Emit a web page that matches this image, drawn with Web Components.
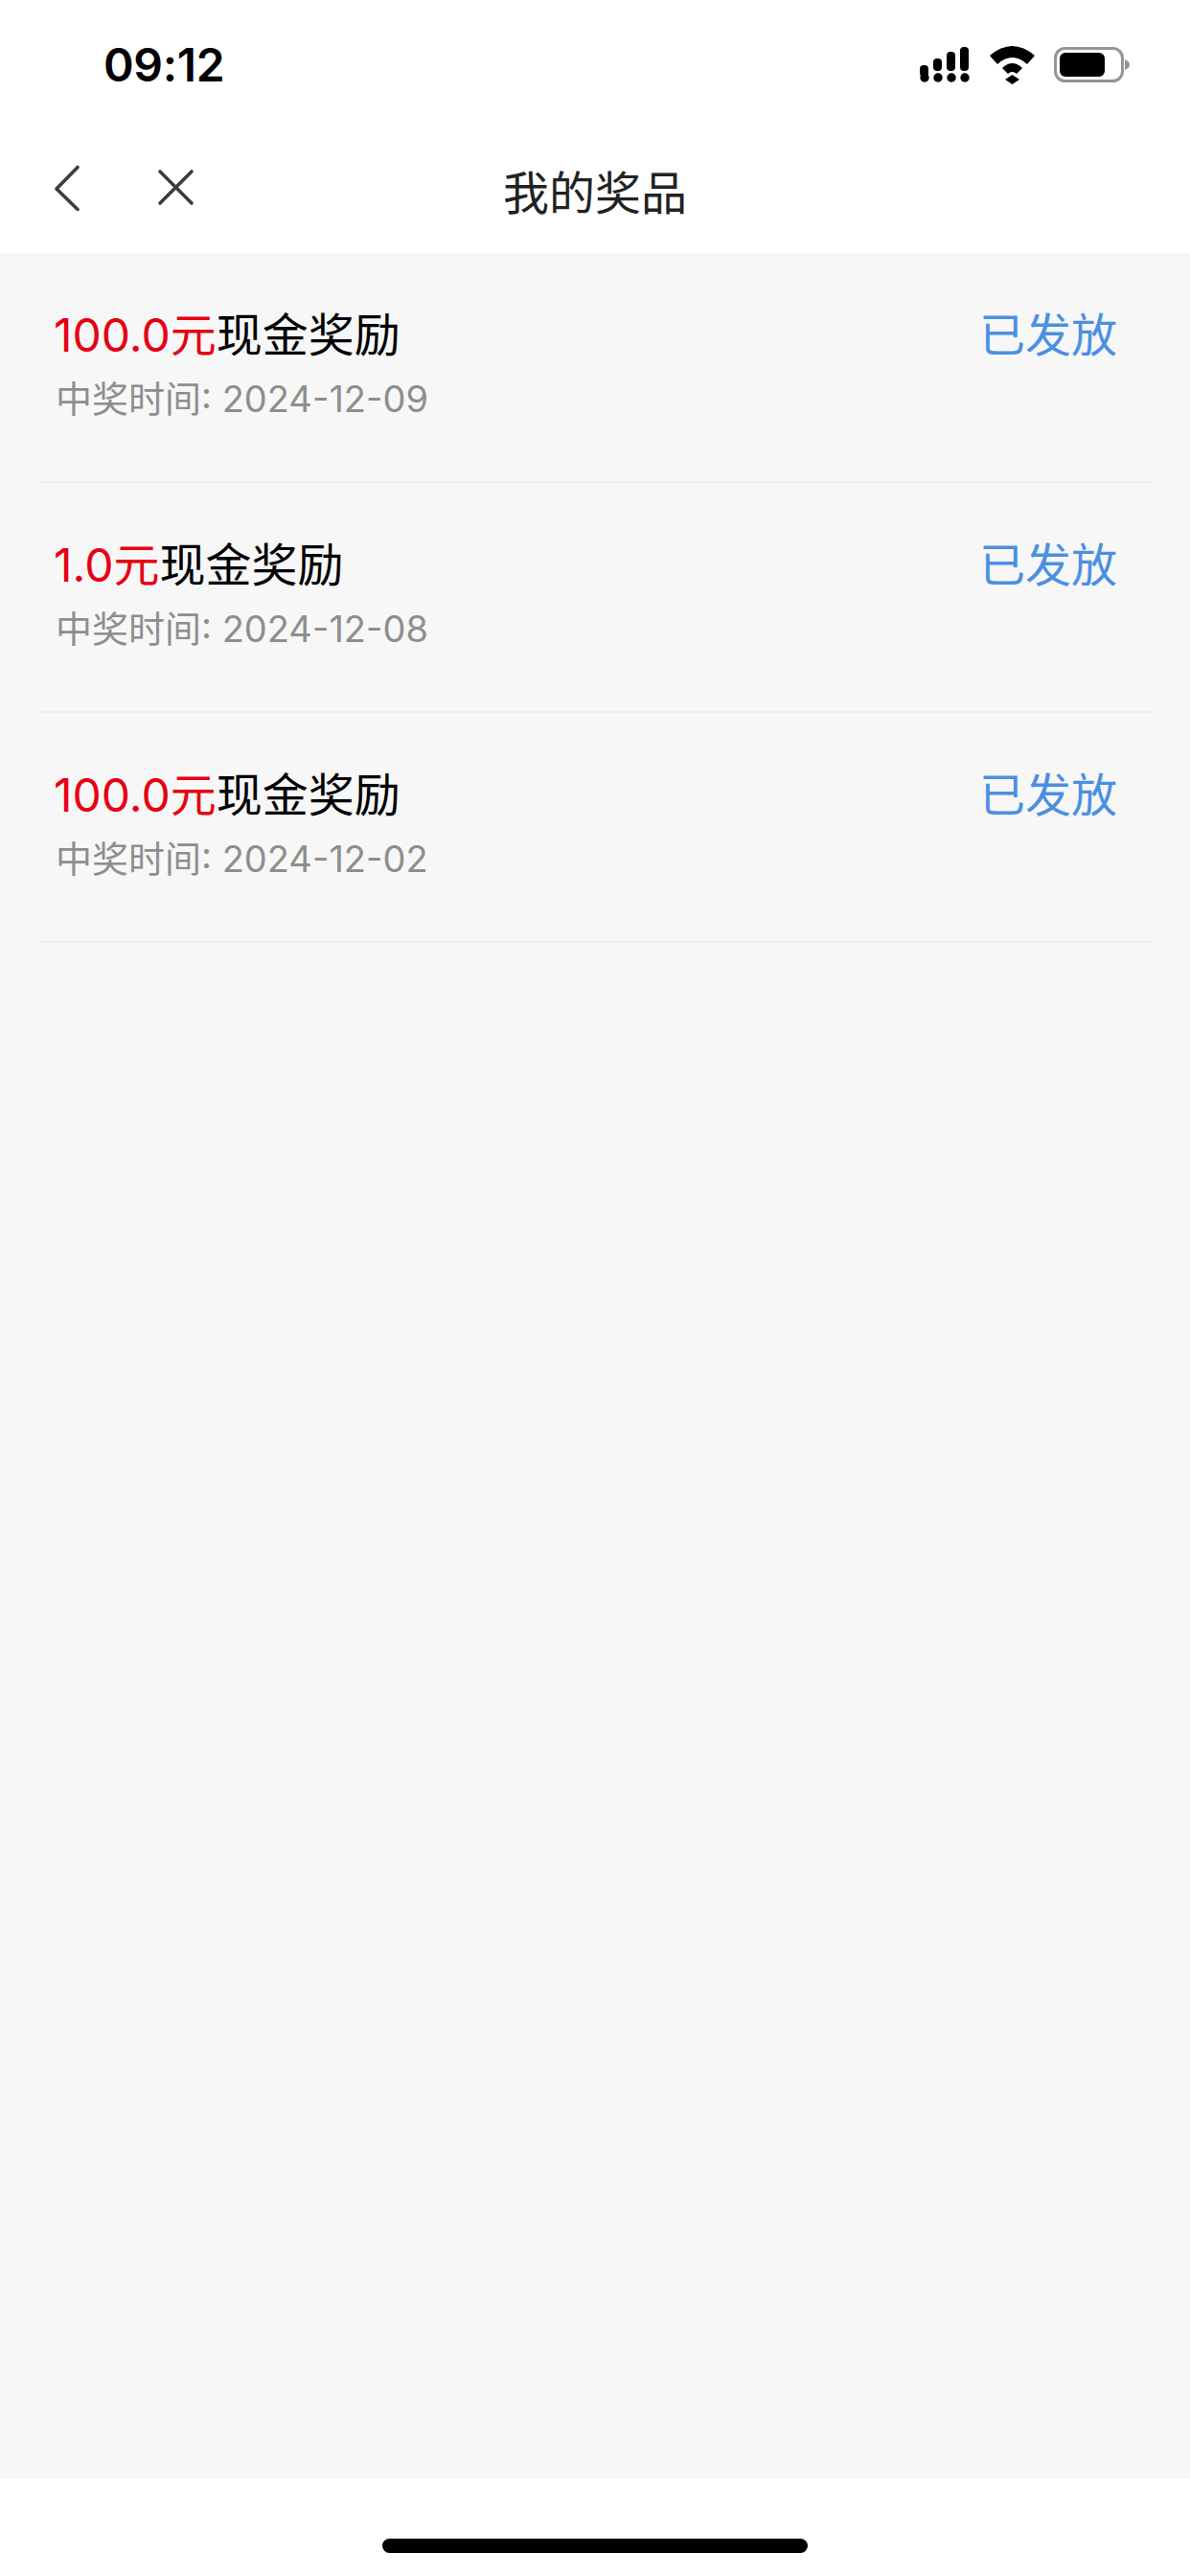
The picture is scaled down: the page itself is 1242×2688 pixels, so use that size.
<!DOCTYPE html>
<html lang="zh">
<head>
<meta charset="utf-8">
<title>我的奖品</title>
<style>
html, body { margin: 0; height: 100%; }
body {
    display: flex;
    flex-direction: column;
    height: 2688px;
    background: #fff;
    font-family: Inter, "Noto Sans CJK SC", sans-serif;
}
</style>
</head>
<body>
<status-bar time="09:12"></status-bar>
<nav-bar>我的奖品</nav-bar>
<prize-list>
    <prize-row amount="100.0元" date="中奖时间: 2024-12-09" state="已发放"></prize-row>
    <prize-row amount="1.0元" date="中奖时间: 2024-12-08" state="已发放"></prize-row>
    <prize-row amount="100.0元" date="中奖时间: 2024-12-02" state="已发放"></prize-row>
</prize-list>
<home-bar></home-bar>

<script>
class StatusBar extends HTMLElement {
    connectedCallback() {
        this.attachShadow({ mode: 'open' }).innerHTML = `
        <style>
        :host { display: flex; flex: none; height: 132px; box-sizing: border-box; padding: 0 0 0 108px; align-items: flex-start; justify-content: space-between; background: #fff; }
        .time { margin-top: 39px; font: 600 48px/58px Inter, sans-serif; color: #000; letter-spacing: -0.3px; }
        svg { margin: 44px 0 0 0; display: block; }
        </style>
        <span class="time">${this.getAttribute('time')}</span>
        <svg width="282" height="44" viewBox="0 0 282 44">
            <!-- signal -->
            <g fill="#000">
                <rect x="0" y="24" width="9" height="12" rx="4"/>
                <rect x="14" y="17" width="9" height="13" rx="4"/>
                <rect x="28" y="10" width="9" height="20" rx="4"/>
                <rect x="42" y="5" width="9" height="25" rx="4"/>
                <circle cx="5" cy="37" r="4.7"/>
                <circle cx="19" cy="37" r="4.7"/>
                <circle cx="33" cy="37" r="4.7"/>
                <circle cx="47" cy="37" r="4.7"/>
            </g>
            <!-- wifi -->
            <g fill="#000">
                <path d="M73 14 Q96.500 -6 120 14 L112 23 Q96.500 9 81 23 Z"/>
                <path d="M86 27 Q96.500 17 107 27 L101 33 Q96.500 29 92 33 Z"/>
                <path d="M96.500 36 L104 41 L96.500 46 L89 41 Z" transform="translate(0 -2)"/>
            </g>
            <!-- battery -->
            <rect x="141.500" y="6.500" width="70" height="34" rx="10" fill="none" stroke="#959595" stroke-width="3"/>
            <rect x="146" y="11" width="47" height="25" rx="6" fill="#000"/>
            <path d="M214 18 Q219 20 219 23.500 Q219 27 214 29 Z" fill="#959595"/>
        </svg>`;
    }
}

class NavBar extends HTMLElement {
    connectedCallback() {
        this.attachShadow({ mode: 'open' }).innerHTML = `
        <style>
        :host { display: block; flex: none; height: 132px; position: relative; background: #fff; }
        .title { display: flex; height: 100%; align-items: center; justify-content: center; font-size: 48px; color: #222; }
        .icons { position: absolute; left: 56px; top: 40px; display: flex; gap: 80px; }
        svg { display: block; }
        </style>
        <div class="title"><slot></slot></div>
        <div class="icons">
            <svg width="28" height="48" viewBox="0 0 28 48"><path d="M25 2.500 L3 25 L25 46.500" fill="none" stroke="#3c3c3c" stroke-width="3.600" stroke-linecap="round" stroke-linejoin="round"/></svg>
            <svg width="40" height="48" viewBox="0 0 40 48"><path d="M3 7 L36 40 M36 7 L3 40" fill="none" stroke="#3c3c3c" stroke-width="3.600" stroke-linecap="round"/></svg>
        </div>`;
    }
}

class PrizeList extends HTMLElement {
    connectedCallback() {
        this.attachShadow({ mode: 'open' }).innerHTML = `
        <style>
        :host { display: block; flex: 1; background: #f7f7f7; }
        </style>
        <slot></slot>`;
    }
}

class PrizeRow extends HTMLElement {
    connectedCallback() {
        this.attachShadow({ mode: 'open' }).innerHTML = `
        <style>
        :host { display: flex; justify-content: space-between; box-sizing: border-box; height: 240px; margin: 0 40px; padding: 54px 36px 0 16px; border-bottom: 2px solid #eee; }
        .title { font-size: 48px; line-height: 64px; color: #000; white-space: nowrap; }
        .amount { color: #e60012; }
        .date { margin-top: 8px; font-size: 38px; line-height: 52px; color: #8e8e8e; padding-left: 2px; white-space: nowrap; }
        .state { font-size: 48px; line-height: 64px; color: #4a90e2; }
        </style>
        <div>
            <div class="title"><span class="amount">${this.getAttribute('amount')}</span>现金奖励</div>
            <div class="date">${this.getAttribute('date')}</div>
        </div>
        <div class="state">${this.getAttribute('state')}</div>`;
    }
}

class HomeBar extends HTMLElement {
    connectedCallback() {
        this.attachShadow({ mode: 'open' }).innerHTML = `
        <style>
        :host { display: flex; flex: none; height: 102px; justify-content: center; padding-top: 63px; box-sizing: border-box; background: #fff; }
        .bar { width: 444px; height: 15px; border-radius: 8px; background: #000; }
        </style>
        <div class="bar"></div>`;
    }
}

customElements.define('status-bar', StatusBar);
customElements.define('nav-bar', NavBar);
customElements.define('prize-list', PrizeList);
customElements.define('prize-row', PrizeRow);
customElements.define('home-bar', HomeBar);
</script>
</body>
</html>
